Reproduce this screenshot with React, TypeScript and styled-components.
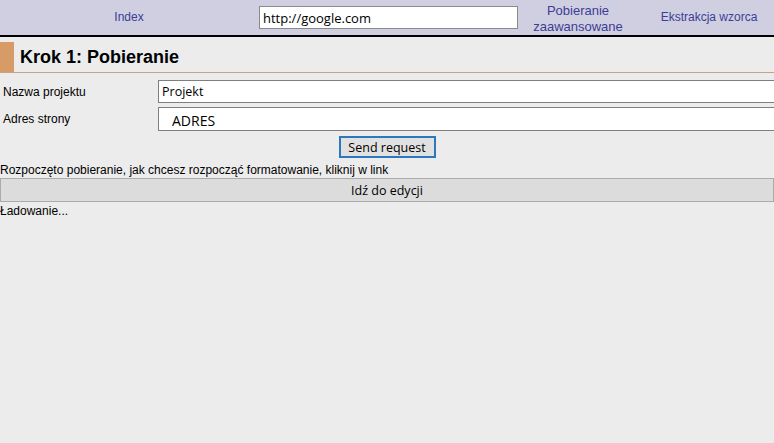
import React from 'react';
import styled, { createGlobalStyle } from 'styled-components';

const GlobalStyle = createGlobalStyle`
  html, body {
    margin: 0;
    padding: 0;
    background: #ececec;
  }
  body {
    font-family: 'Liberation Sans', Arial, sans-serif;
    font-size: 12px;
    color: #000;
  }
`;

const App = () => {
  return (
    <>
      <GlobalStyle />
      <Page>
        <Header>
          <NavCell>
            <NavLink href="#">Index</NavLink>
          </NavCell>
          <NavCell $align="left">
            <UrlInput defaultValue="http://google.com" />
          </NavCell>
          <NavCell>
            <NavLink href="#" $size={13} $lh={16}>
              Pobieranie
              <br />
              zaawansowane
            </NavLink>
          </NavCell>
          <NavCell>
            <NavLink href="#">Ekstrakcja wzorca</NavLink>
          </NavCell>
        </Header>

        <StepTitle>
          <StepMark />
          <StepText>Krok 1: Pobieranie</StepText>
        </StepTitle>

        <Form>
          <FieldRow>
            <Label>Nazwa projektu</Label>
            <TextField defaultValue="Projekt" />
          </FieldRow>
          <FieldRow>
            <Label>Adres strony</Label>
            <TextField $big defaultValue="ADRES" />
          </FieldRow>
          <ButtonRow>
            <SendButton>Send request</SendButton>
          </ButtonRow>
        </Form>

        <Status>Rozpoczęto pobieranie, jak chcesz rozpocząć formatowanie, kliknij w link</Status>
        <EditBar>Idź do edycji</EditBar>
        <Status $tight>Ładowanie...</Status>
      </Page>
    </>
  );
};

export default App;

const Page = styled.div`
  min-height: 100vh;
  background: #ececec;
  overflow: hidden;
`;

const Header = styled.div`
  display: grid;
  grid-template-columns: 258px 262px 116px 146px;
  height: 35px;
  background: #cfcfe1;
  border-bottom: 2px solid #000;
`;

const NavCell = styled.div<{ $align?: 'left' | 'center' }>`
  display: flex;
  align-items: center;
  justify-content: ${({ $align }) => ($align === 'left' ? 'flex-start' : 'center')};
  text-align: center;
`;

const NavLink = styled.a<{ $size?: number; $lh?: number }>`
  color: #3d3d96;
  text-decoration: none;
  font-size: ${({ $size }) => $size ?? 12}px;
  line-height: ${({ $lh }) => $lh ?? 15}px;
  margin-top: ${({ $lh }) => ($lh ? '2px' : '0')};
`;

const UrlInput = styled.input`
  box-sizing: border-box;
  width: 259px;
  height: 23px;
  margin-left: 1px;
  padding: 0 3px;
  border: 1px solid #8a8a8a;
  background: #fff;
  font-family: 'Open Sans', 'Noto Sans', sans-serif;
  font-size: 13px;
  color: #000;
  outline: none;
`;

const StepTitle = styled.div`
  display: flex;
  align-items: center;
  height: 30px;
  margin-top: 5px;
  border-bottom: 1px solid #c8a283;
`;

const StepMark = styled.div`
  width: 14px;
  align-self: stretch;
  background: #d69b67;
`;

const StepText = styled.h1`
  margin: 0 0 0 6px;
  font-size: 18px;
  font-weight: bold;
  line-height: 30px;
`;

const Form = styled.div`
  display: flex;
  flex-direction: column;
  padding-top: 7px;
`;

const FieldRow = styled.div`
  display: flex;
  align-items: center;
  height: 23px;
  margin-bottom: 4px;
`;

const Label = styled.label`
  width: 155px;
  padding-left: 3px;
  font-size: 12px;
`;

const TextField = styled.input<{ $big?: boolean }>`
  box-sizing: border-box;
  flex: 1;
  margin-right: -4px;
  height: ${({ $big }) => ($big ? '24px' : '23px')};
  padding: ${({ $big }) => ($big ? '3px 0 0 13px' : '0 3px')};
  border: 1px solid #7f7f7f;
  background: #fff;
  font-family: 'Open Sans', 'Noto Sans', sans-serif;
  font-size: ${({ $big }) => ($big ? '14px' : '12.5px')};
  color: #000;
  outline: none;
`;

const ButtonRow = styled.div`
  display: flex;
  justify-content: center;
  padding-top: 2px;
`;

const SendButton = styled.button`
  box-sizing: border-box;
  width: 97px;
  height: 22px;
  padding: 0;
  border: 2px solid #2b78be;
  background: #e1e1e1;
  font-family: 'Open Sans', 'Noto Sans', sans-serif;
  font-size: 12.5px;
  color: #000;
  cursor: pointer;
`;

const Status = styled.div<{ $tight?: boolean }>`
  font-size: 12px;
  line-height: 15px;
  padding-top: ${({ $tight }) => ($tight ? '2px' : '5px')};
`;

const EditBar = styled.div`
  box-sizing: border-box;
  width: 774px;
  height: 24px;
  border: 1px solid #ababab;
  background: #dcdcdc;
  display: flex;
  align-items: center;
  justify-content: center;
  font-family: 'Open Sans', 'Noto Sans', sans-serif;
  font-size: 12.5px;
`;
